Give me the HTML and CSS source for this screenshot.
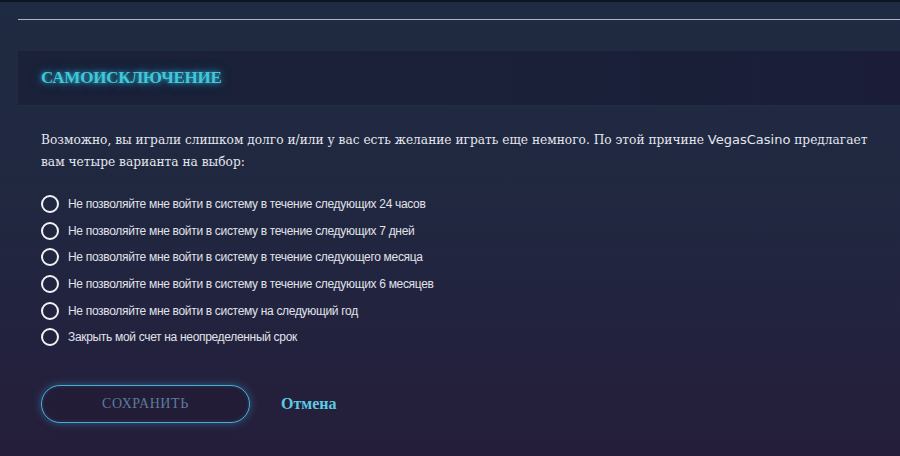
FILE: index.html
```html
<!DOCTYPE html>
<html lang="ru">
<head>
<meta charset="utf-8">
<title>Самоисключение</title>
<link rel="stylesheet" href="styles.css">
</head>
<body>
<div class="topbar"></div>
<div class="rule"></div>
<section class="panel">
  <div class="panel-head">
    <h2 class="title">САМОИСКЛЮЧЕНИЕ</h2>
  </div>
  <div class="panel-body">
    <p class="intro">Возможно, вы играли слишком долго и/или у вас есть желание играть еще немного. По этой причине <span class="brand">VegasCasino</span> предлагает вам четыре варианта на выбор:</p>
    <ul class="options">
      <li class="option"><span class="radio"></span><span class="label">Не позволяйте мне войти в систему в течение следующих 24 часов</span></li>
      <li class="option"><span class="radio"></span><span class="label">Не позволяйте мне войти в систему в течение следующих 7 дней</span></li>
      <li class="option"><span class="radio"></span><span class="label">Не позволяйте мне войти в систему в течение следующего месяца</span></li>
      <li class="option"><span class="radio"></span><span class="label">Не позволяйте мне войти в систему в течение следующих 6 месяцев</span></li>
      <li class="option"><span class="radio"></span><span class="label">Не позволяйте мне войти в систему на следующий год</span></li>
      <li class="option"><span class="radio"></span><span class="label">Закрыть мой счет на неопределенный срок</span></li>
    </ul>
    <div class="actions">
      <button class="save" type="button">СОХРАНИТЬ</button>
      <a class="cancel" href="#">Отмена</a>
    </div>
  </div>
</section>
</body>
</html>
```

FILE: styles.css
```css
html, body {
  margin: 0;
  padding: 0;
}
body {
  width: 900px;
  height: 456px;
  overflow: hidden;
  background: linear-gradient(180deg, #1f2b42 0%, #202840 40%, #23223e 75%, #251e3a 100%);
  font-family: "Liberation Serif", serif;
  color: #e6e8ee;
}
.topbar {
  height: 2px;
  background: #0f1422;
}
.rule {
  margin: 17px 0 0 18px;
  height: 1px;
  background: #aeb6c6;
}
.panel {
  margin: 31px 0 0 18px;
}
.panel-head {
  height: 55px;
  display: flex;
  align-items: center;
  padding-left: 23px;
  background: linear-gradient(90deg, #1a2139 0%, #192038 60%, #1b1d38 100%);
  border-bottom: 1px solid #222c44;
  box-sizing: border-box;
}
.title {
  margin: 0;
  font-family: "Liberation Serif", serif;
  font-weight: bold;
  font-size: 17px;
  letter-spacing: -0.2px;
  color: #42c8d8;
  text-shadow: 0 0 5px rgba(50, 200, 230, 0.8), 0 0 12px rgba(40, 170, 220, 0.5);
}
.panel-body {
  padding: 0 23px;
}
.intro {
  margin: 23px 0 0;
  font-family: "DejaVu Serif", serif;
  font-size: 12.2px;
  line-height: 22px;
  color: #e4e6ee;
}
.brand {
  font-family: "DejaVu Sans", sans-serif;
  font-size: 13px;
  line-height: 1;
}
.options {
  list-style: none;
  margin: 18px 0 0;
  padding: 0;
  display: grid;
  grid-auto-rows: 26.6px;
}
.option {
  display: flex;
  align-items: center;
  gap: 9px;
}
.radio {
  width: 18px;
  height: 18px;
  box-sizing: border-box;
  border: 2px solid #f2f2f6;
  border-radius: 50%;
  flex: none;
}
.label {
  font-family: "Liberation Sans", sans-serif;
  font-size: 12px;
  color: #e0e2ea;
  letter-spacing: -0.32px;
}
.actions {
  margin-top: 34px;
  display: flex;
  align-items: center;
  gap: 31px;
}
.save {
  width: 209px;
  height: 38px;
  border-radius: 19px;
  border: 1.5px solid #4aaed2;
  background: #221c37;
  box-shadow: 0 0 8px rgba(60, 170, 220, 0.45), inset 0 0 4px rgba(60, 170, 220, 0.2);
  color: #5c7c9a;
  font-family: "Liberation Serif", serif;
  font-size: 14px;
  letter-spacing: 0.6px;
  padding: 0;
  cursor: pointer;
}
.cancel {
  font-family: "Liberation Serif", serif;
  font-weight: bold;
  font-size: 16px;
  color: #5ecae2;
  text-decoration: none;
}
```
